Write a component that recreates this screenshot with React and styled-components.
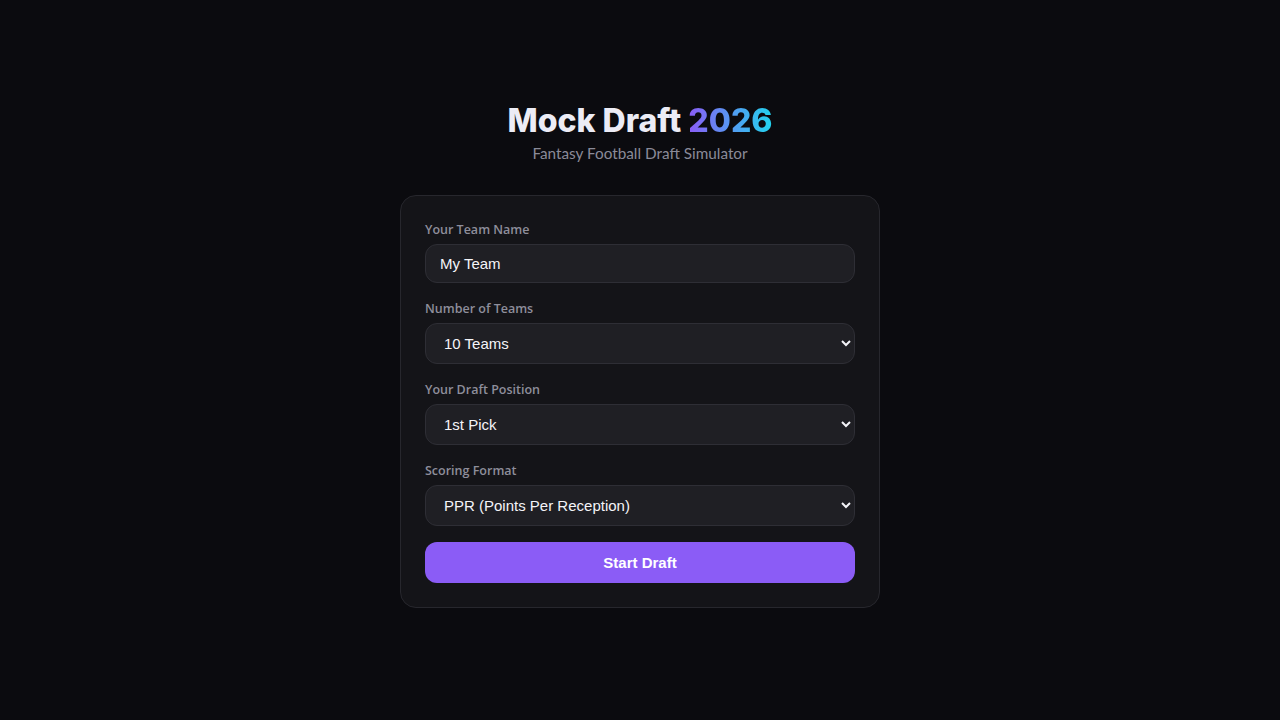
import React, { useState } from "react";
import styled, { createGlobalStyle } from "styled-components";

const GlobalStyle = createGlobalStyle`
  html, body {
    margin: 0;
    padding: 0;
    background: #0b0b0f;
  }
  body {
    font-family: "Lato", "Noto Sans", sans-serif;
    color: #ececf3;
  }
  * { box-sizing: border-box; }
`;

const Page = styled.main`
  min-height: 100vh;
  display: flex;
  flex-direction: column;
  align-items: center;
  padding-top: 101px;
`;

const Header = styled.header`
  display: flex;
  flex-direction: column;
  align-items: center;
  margin-bottom: 32px;
`;

const Title = styled.h1`
  margin: 0;
  font-family: "Inter", sans-serif;
  font-weight: 800;
  font-size: 32px;
  line-height: 40px;
  color: #ececf5;
`;

const Accent = styled.span`
  background: linear-gradient(90deg, #8b5cf6 0%, #22d3ee 100%);
  -webkit-background-clip: text;
  background-clip: text;
  color: transparent;
`;

const Subtitle = styled.p`
  margin: 2px 0 0;
  font-family: "Lato", sans-serif;
  font-size: 15.3px;
  line-height: 20px;
  color: #8a8a98;
`;

const Card = styled.form`
  width: 480px;
  background: #141418;
  border: 1px solid #27272d;
  border-radius: 16px;
  padding: 24px;
  display: flex;
  flex-direction: column;
  gap: 16px;
`;

const Field = styled.div`
  display: flex;
  flex-direction: column;
  gap: 5px;
`;

const Label = styled.label`
  font-family: "Open Sans", sans-serif;
  font-weight: 600;
  font-size: 12.5px;
  line-height: 19px;
  color: #8e8e9b;
`;

const controlBase = `
  width: 100%;
  background: #1f1f24;
  border: 1px solid #2e2e35;
  border-radius: 12px;
  color: #f4f4f8;
  font-family: "Liberation Sans", Arial, sans-serif;
  font-size: 15px;
  outline: none;
`;

const TextInput = styled.input`
  ${controlBase}
  height: 39px;
  padding: 0 14px;
`;

const Select = styled.select`
  ${controlBase}
  height: 41px;
  padding: 0 8px 0 14px;
  color-scheme: dark;
`;

const StartButton = styled.button`
  height: 41px;
  border: none;
  border-radius: 12px;
  background: #8b5cf6;
  color: #ffffff;
  font-family: "Liberation Sans", Arial, sans-serif;
  font-weight: 700;
  font-size: 15px;
  cursor: pointer;
`;

export default function App() {
  const [name, setName] = useState("My Team");
  const [teams, setTeams] = useState("10");
  const [pick, setPick] = useState("1");
  const [scoring, setScoring] = useState("ppr");

  return (
    <>
      <GlobalStyle />
      <Page>
        <Header>
          <Title>
            Mock Draft <Accent>2026</Accent>
          </Title>
          <Subtitle>Fantasy Football Draft Simulator</Subtitle>
        </Header>
        <Card onSubmit={(e) => e.preventDefault()}>
          <Field>
            <Label htmlFor="team-name">Your Team Name</Label>
            <TextInput
              id="team-name"
              value={name}
              onChange={(e) => setName(e.target.value)}
            />
          </Field>
          <Field>
            <Label htmlFor="team-count">Number of Teams</Label>
            <Select id="team-count" value={teams} onChange={(e) => setTeams(e.target.value)}>
              <option value="8">8 Teams</option>
              <option value="10">10 Teams</option>
              <option value="12">12 Teams</option>
              <option value="14">14 Teams</option>
            </Select>
          </Field>
          <Field>
            <Label htmlFor="draft-pos">Your Draft Position</Label>
            <Select id="draft-pos" value={pick} onChange={(e) => setPick(e.target.value)}>
              <option value="1">1st Pick</option>
              <option value="2">2nd Pick</option>
              <option value="3">3rd Pick</option>
              <option value="4">4th Pick</option>
            </Select>
          </Field>
          <Field>
            <Label htmlFor="scoring">Scoring Format</Label>
            <Select id="scoring" value={scoring} onChange={(e) => setScoring(e.target.value)}>
              <option value="ppr">PPR (Points Per Reception)</option>
              <option value="half">Half PPR</option>
              <option value="std">Standard</option>
            </Select>
          </Field>
          <StartButton type="submit">Start Draft</StartButton>
        </Card>
      </Page>
    </>
  );
}
